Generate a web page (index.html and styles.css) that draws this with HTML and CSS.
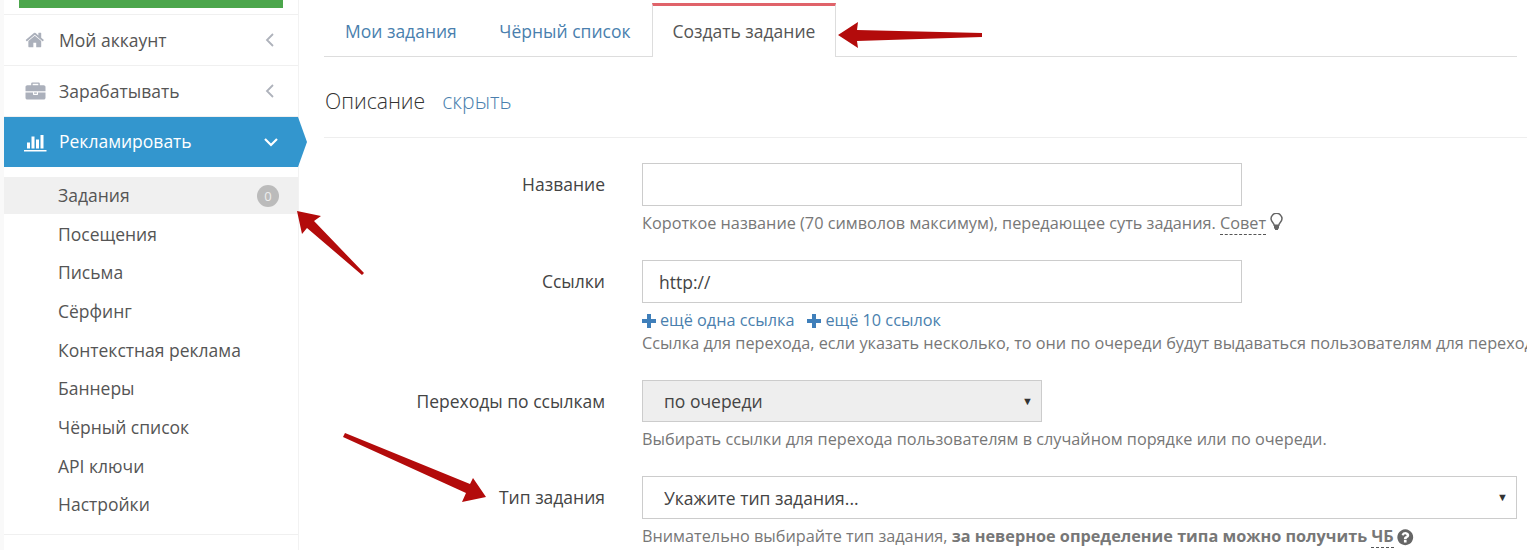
FILE: index.html
```html
<!DOCTYPE html>
<html lang="ru">
  <head>
    <meta charset="UTF-8" />
    <meta name="viewport" content="width=device-width, initial-scale=1.0" />
    <title>Создать задание</title>
    <link rel="stylesheet" href="styles.css">
  </head>
  <body>
    <div class="page">
      <aside class="sidebar">
        <div class="balance"><div class="balance-bar"></div></div>
        <a class="menu-item">
          <svg class="menu-icon" viewBox="0 0 1792 1792"><path d="M1408 992v480q0 26-19 45t-45 19h-384v-384h-256v384h-384q-26 0-45-19t-19-45v-480q0-1 .5-3t.5-3l575-474 575 474q1 2 1 6zm223-69l-62 74q-8 9-21 11h-3q-13 0-21-7l-692-577-692 577q-12 8-24 7-13-2-21-11l-62-74q-8-10-7-23.5t11-21.5l719-599q32-26 76-26t76 26l244 204v-195q0-14 9-23t23-9h192q14 0 23 9t9 23v408l219 182q10 8 11 21.5t-7 23.5z"/></svg>
          <span class="menu-label">Мой аккаунт</span>
          <svg class="menu-angle" viewBox="0 0 10 16"><path d="M8 2L2 8l6 6"/></svg>
        </a>
        <a class="menu-item">
          <svg class="menu-icon" viewBox="0 0 1792 1792"><path d="M640 384h512v-128h-512v128zm1152 640v480q0 66-47 113t-113 47h-1472q-66 0-113-47t-47-113v-480h672v160q0 26 19 45t45 19h320q26 0 45-19t19-45v-160h672zm-768 0v128h-256v-128h256zm768-480v384h-1792v-384q0-66 47-113t113-47h352v-160q0-40 28-68t68-28h576q40 0 68 28t28 68v160h352q66 0 113 47t47 113z"/></svg>
          <span class="menu-label">Зарабатывать</span>
          <svg class="menu-angle" viewBox="0 0 10 16"><path d="M8 2L2 8l6 6"/></svg>
        </a>
        <a class="menu-item active">
          <svg class="menu-icon" viewBox="0 0 2048 1792"><path d="M512 896v512h-256v-512h256zm384-512v1024h-256v-1024h256zm1024 1152v128h-2048v-1536h128v1408h1920zm-640-896v768h-256v-768h256zm384-384v1152h-256v-1152h256z"/></svg>
          <span class="menu-label">Рекламировать</span>
          <svg class="menu-angle" viewBox="0 0 16 10"><path d="M2 2l6 6 6-6"/></svg>
        </a>
        <ul class="submenu">
          <li class="submenu-item current"><span class="submenu-text">Задания</span> <span class="count">0</span></li>
          <li class="submenu-item">Посещения</li>
          <li class="submenu-item">Письма</li>
          <li class="submenu-item">Сёрфинг</li>
          <li class="submenu-item">Контекстная реклама</li>
          <li class="submenu-item">Баннеры</li>
          <li class="submenu-item">Чёрный список</li>
          <li class="submenu-item">API ключи</li>
          <li class="submenu-item">Настройки</li>
        </ul>
      </aside>

      <main class="content">
        <nav class="tabs">
          <a class="tab">Мои задания</a>
          <a class="tab">Чёрный список</a>
          <a class="tab selected">Создать задание</a>
        </nav>

        <div class="section-head">
          <span class="section-title">Описание</span>
          <a class="link">скрыть</a>
        </div>

        <form class="form">
          <div class="row">
            <label class="row-label">Название</label>
            <div class="row-field">
              <input class="control" type="text">
              <p class="hint">Короткое название (70 символов максимум), передающее суть задания. <span class="dotted">Совет</span>
                <svg class="bulb" viewBox="0 0 13 18"><path class="bulb-glass" d="M4.200 12.200C4 10 1 8.600 1 5.800a5.500 5.500 0 0 1 11 0c0 2.800-3 4.200-3.200 6.400z"/><path class="bulb-base" d="M4 13h5v2.200l-1 .8v1H5v-1l-1-.8z"/></svg>
              </p>
            </div>
          </div>

          <div class="row">
            <label class="row-label">Ссылки</label>
            <div class="row-field">
              <input class="control" type="text" value="http://">
              <div class="more-links">
                <a class="link"><svg class="plus" viewBox="0 0 14 14"><path d="M5 0h4v5h5v4H9v5H5V9H0V5h5z"/></svg>ещё одна ссылка</a>
                <a class="link"><svg class="plus" viewBox="0 0 14 14"><path d="M5 0h4v5h5v4H9v5H5V9H0V5h5z"/></svg>ещё 10 ссылок</a>
              </div>
              <p class="hint hint-tight">Ссылка для перехода, если указать несколько, то они по очереди будут выдаваться пользователям для перехода.</p>
            </div>
          </div>

          <div class="row">
            <label class="row-label">Переходы по ссылкам</label>
            <div class="row-field">
              <div class="select-wrap small">
                <select class="control filled"><option>по очереди</option></select>
                <span class="select-arrow">▼</span>
              </div>
              <p class="hint">Выбирать ссылки для перехода пользователям в случайном порядке или по очереди.</p>
            </div>
          </div>

          <div class="row">
            <label class="row-label">Тип задания</label>
            <div class="row-field">
              <div class="select-wrap">
                <select class="control tall"><option>Укажите тип задания...</option></select>
                <span class="select-arrow">▼</span>
              </div>
              <p class="hint">Внимательно выбирайте тип задания, <b>за неверное определение типа можно получить <span class="dotted">ЧБ</span></b>
                <svg class="help" viewBox="0 0 1792 1792"><path d="M1024 1376v-192q0-14-9-23t-23-9h-192q-14 0-23 9t-9 23v192q0 14 9 23t23 9h192q14 0 23-9t9-23zm256-672q0-88-55.500-163t-138.500-116-170-41q-243 0-371 213-15 24 8 42l132 100q7 6 19 6 16 0 25-12 53-68 86-92 34-24 86-24 48 0 85.500 26t37.500 59q0 38-20 61t-68 45q-63 28-115.500 86.500t-52.500 125.500v36q0 14 9 23t23 9h192q14 0 23-9t9-23q0-19 21.500-49.500t54.500-49.500q32-18 49-28.500t46-35 44.500-48 28-60.500 12.500-81zm384 192q0 209-103 385.500t-279.500 279.500-385.500 103-385.500-103-279.500-279.500-103-385.500 103-385.500 279.500-279.500 385.500-103 385.500 103 279.500 279.500 103 385.500z"/></svg>
              </p>
            </div>
          </div>
        </form>
      </main>

      <!-- red arrows drawn over the screenshot -->
      <svg class="arrows" viewBox="0 0 1527 550">
        <path d="M838 35L858 22L857 30L982 33L982 37L857 41L858 48Z"/>
        <path d="M297 211L321 216L314 221L364 273L362 275L307 228L302 234Z"/>
        <path d="M486 497L462 502L466 493L343 437L345 433L470 484L473 478Z"/>
      </svg>
    </div>
  </body>
</html>
```

FILE: styles.css
```css
* {
  box-sizing: border-box;
}

html,
body {
  margin: 0;
  height: 100%;
  overflow: hidden;
  background-color: #fff;
}

body {
  font-family: "Open Sans", sans-serif;
  font-size: 17.5px;
  color: #555;
}

.page {
  display: flex;
  position: relative;
  height: 550px;
  overflow: hidden;
  background: linear-gradient(to right, #f9f9f9 4px, #fff 4px);
}

a {
  cursor: pointer;
}

/* sidebar */
.sidebar {
  flex: none;
  width: 295px;
  margin-left: 4px;
  background-color: #fff;
  border-right: 1px solid #f2f2f2;
}

.balance {
  height: 15px;
  padding: 0 15px;
  border-bottom: 1px solid #f0f0f0;
}

.balance-bar {
  height: 8px;
  background-color: #4ca64c;
}

.menu-item {
  display: flex;
  align-items: center;
  height: 51px;
  padding: 0 23px 0 20px;
  border-bottom: 1px solid #f0f0f0;
  color: #555;
}

.menu-icon {
  flex: none;
  width: 23px;
  height: 20px;
  fill: #abb0bb;
}

.menu-label {
  flex: 1;
  margin-left: 12px;
}

.menu-angle {
  flex: none;
  width: 10px;
  height: 16px;
  fill: none;
  stroke: #aeb2bb;
  stroke-width: 1.8;
}

.menu-item.active {
  position: relative;
  height: 50px;
  border-bottom: none;
  background-color: #3396ce;
  color: #fff;
}

.menu-item.active .menu-icon {
  width: 24px;
  height: 21px;
  fill: #fff;
}

.menu-item.active .menu-label {
  margin-left: 11px;
  padding-bottom: 2px;
}

.menu-item.active .menu-angle {
  width: 16px;
  height: 10px;
  margin-right: -4px;
  stroke: #fff;
  stroke-width: 2.2;
}

/* tip of the active item, sticks out past the sidebar edge */
.menu-item.active::after {
  content: "";
  position: absolute;
  left: 100%;
  top: 0;
  border-left: 9px solid #3396ce;
  border-top: 25px solid transparent;
  border-bottom: 25px solid transparent;
}

.submenu {
  list-style: none;
  margin: 10px 0 0;
  padding: 0 0 10px;
  border-bottom: 1px solid #f0f0f0;
}

.submenu-item {
  display: flex;
  align-items: center;
  justify-content: space-between;
  height: 38.7px;
  padding: 0 19px 0 54px;
}

.submenu-item.current {
  height: 37.2px;
  background-color: #f0f0f0;
}

.submenu-text {
  padding-bottom: 2px;
}

.count {
  width: 22px;
  height: 22px;
  border-radius: 50%;
  background-color: #bbb;
  color: #eee;
  font-size: 13px;
  line-height: 22px;
  text-align: center;
}

/* main column */
.content {
  flex: 1;
  min-width: 0;
  padding: 3px 10px 0 25px;
}

.tabs {
  display: flex;
  height: 54px;
  border-bottom: 1px solid #ddd;
}

.tab {
  padding: 16px 21.5px 0 21px;
  color: #4a7fae;
}

.selected {
  height: 54px;
  background-color: #fff;
  border: 1px solid #ddd;
  border-top: 3px solid #e0636a;
  border-bottom: none;
  padding: 13px 19.5px 0;
  color: #555;
}

.section-head {
  display: flex;
  align-items: baseline;
  gap: 17px;
  height: 81px;
  padding-top: 29px;
  padding-left: 1px;
  border-bottom: 1px solid #eee;
  margin-right: -10px;
}

.section-title {
  font-size: 21.2px;
  font-weight: 300;
  color: #333;
}

.section-head .link {
  font-size: 21.2px;
  font-weight: 300;
}

.link {
  color: #4a7fae;
}

.form {
  padding-top: 25px;
}

.row {
  display: grid;
  grid-template-columns: 281px minmax(0, 1fr);
  column-gap: 37px;
  margin-bottom: 27px;
}

.row-label {
  padding-top: 9px;
  text-align: right;
  color: #444;
}

.control {
  display: block;
  width: 600px;
  height: 43px;
  padding: 0 16px;
  border: 1px solid #ccc;
  background-color: #fff;
  font-family: inherit;
  font-size: 17.5px;
  color: #444;
  border-radius: 0;
  outline: none;
}

select.control {
  width: 100%;
  height: 42px;
  padding: 0 21px;
  appearance: none;
}

select.tall {
  height: 43px;
}

.filled {
  background-color: #eee;
}

.select-wrap {
  position: relative;
}

.select-wrap.small {
  width: 400px;
}

.select-arrow {
  position: absolute;
  right: 9px;
  top: 13px;
  font-size: 11px;
  color: #333;
  pointer-events: none;
}

.hint {
  margin: 7px 0 0;
  font-size: 16.25px;
  line-height: 20px;
  color: #777;
  white-space: nowrap;
}

.hint-tight {
  margin-top: 3px;
}

.hint b {
  font-weight: 700;
}

.dotted {
  border-bottom: 1px dashed #555;
}

.more-links {
  display: flex;
  gap: 13px;
  margin-top: 7px;
  font-size: 16.25px;
  line-height: 20px;
}

.plus {
  width: 14px;
  height: 14px;
  margin-right: 4px;
  vertical-align: -2px;
  fill: #3f7fba;
}

.bulb {
  width: 13px;
  height: 18px;
  vertical-align: -2px;
}

.bulb-glass {
  fill: none;
  stroke: #666;
  stroke-width: 1.5;
}

.bulb-base {
  fill: #666;
}

.help {
  width: 18.5px;
  height: 18.5px;
  margin-left: -1.5px;
  vertical-align: -4px;
  fill: #666;
}

.arrows {
  position: absolute;
  left: 0;
  top: 0;
  width: 1527px;
  height: 550px;
  fill: #b30b0b;
  pointer-events: none;
}
```
